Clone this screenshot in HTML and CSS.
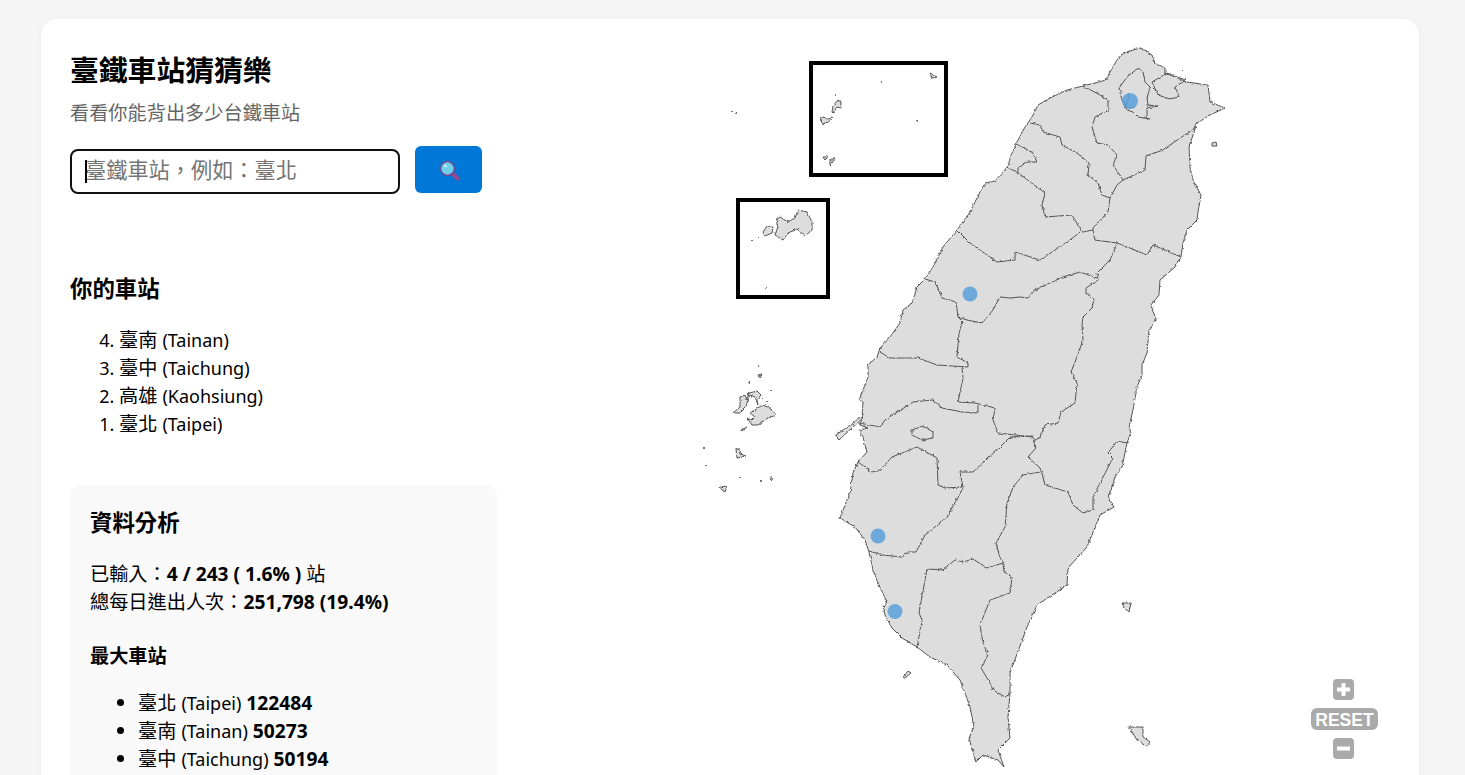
FILE: index.html
```html
<!DOCTYPE html>
<html lang="zh-Hant">
<head>
<meta charset="utf-8">
<title>臺鐵車站猜猜樂</title>
<link rel="stylesheet" href="styles.css">
</head>
<body>
<main class="card">
  <section class="left">
    <h1 class="title">臺鐵車站猜猜樂</h1>
    <p class="subtitle">看看你能背出多少台鐵車站</p>
    <form class="search">
      <div class="field">
        <input class="input" type="text" placeholder="臺鐵車站，例如：臺北">
        <span class="caret"></span>
      </div>
      <button class="go" type="button" aria-label="搜尋">
        <svg class="lens" width="26" height="26" viewBox="0 0 26 26">
          <path d="M15.5 15.5L20.5 20.5" stroke="#94488f" stroke-width="4.2" stroke-linecap="round"/>
          <circle cx="10.5" cy="10.5" r="6.9" fill="#6fcfe9" stroke="#6f4a92" stroke-width="1.5"/>
          <circle cx="8.5" cy="8" r="1.6" fill="#b5ebf6"/>
        </svg>
      </button>
    </form>
    <h2 class="heading yours">你的車站</h2>
    <ol class="list guessed" reversed>
      <li>臺南 <span class="en">(Tainan)</span></li>
      <li>臺中 <span class="en">(Taichung)</span></li>
      <li>高雄 <span class="en">(Kaohsiung)</span></li>
      <li>臺北 <span class="en">(Taipei)</span></li>
    </ol>
    <section class="stats">
      <h2 class="heading">資料分析</h2>
      <p class="figures">已輸入：<b>4 / 243 ( 1.6% )</b> 站<br>總每日進出人次：<b>251,798 (19.4%)</b></p>
      <h3 class="sub">最大車站</h3>
      <ul class="list largest">
        <li>臺北 <span class="en">(Taipei)</span> <b>122484</b></li>
        <li>臺南 <span class="en">(Tainan)</span> <b>50273</b></li>
        <li>臺中 <span class="en">(Taichung)</span> <b>50194</b></li>
      </ul>
    </section>
  </section>
  <svg class="map" width="849" height="726" viewBox="540 49 849 726">
    <defs>
      <filter id="rough" x="-2%" y="-2%" width="104%" height="104%">
        <feTurbulence type="fractalNoise" baseFrequency="0.3" numOctaves="2" seed="4"/>
        <feDisplacementMap in="SourceGraphic" scale="3" xChannelSelector="R" yChannelSelector="G"/>
        <feGaussianBlur stdDeviation="0.35"/>
      </filter>
    </defs>
    <g class="land" filter="url(#rough)">
      <path d="M1140 48L1123 53L1117 60L1110 72L1106 80L1095 83L1083 86L1067 90L1050 98L1038 105L1032 117L1025 127L1017 142L1012 153L1008 166L1003 172L995 181L985 183L980 192L970 212L957 230L943 247L933 267L925 279L917 287L912 303L903 310L900 323L890 337L880 348L877 357L868 365L868 377L863 390L859 400L863 402L862 418L860 425L868 428L859 430L863 437L867 452L858 462L853 473L850 493L847 500L840 518L855 527L865 540L869 552L873 570L878 583L887 602L883 607L885 615L892 628L902 638L917 647L930 657L947 665L960 680L965 693L970 707L974 727L969 738L976 762L983 755L998 760L1004 767L998 750L1010 738L1008 717L1010 693L1010 673L1027 627L1037 605L1067 585L1068 568L1087 547L1100 515L1114 507L1108 497L1112 487L1115 477L1122 467L1127 443L1131 432L1129 427L1133 410L1137 387L1142 375L1142 365L1147 353L1149 330L1156 320L1151 305L1159 295L1160 280L1175 267L1181 257L1183 243L1187 230L1197 220L1198 212L1201 195L1193 180L1190 167L1189 147L1197 123L1210 115L1225 108L1210 102L1208 85L1187 82L1165 73L1165 68L1155 63L1152 55Z"/>
      <path class="inner" d="M1083 86L1100 95L1108 100L1108 110L1095 117L1092 127L1097 143L1108 145L1117 155L1113 165L1123 180L1145 170L1146 156L1163 150L1180 138L1193 130L1197 122"/>
      <path class="inner" d="M1030 123L1040 125L1043 132L1060 137L1062 145L1077 153L1089 163L1088 175L1098 183L1102 195L1110 198"/>
      <path class="inner" d="M1123 180L1117 185L1110 198L1108 212L1093 228L1093 230L1082 232"/>
      <path class="inner" d="M1015 143L1033 153L1037 162L1027 162L1018 168L1018 173"/>
      <path class="inner" d="M1007 167L1018 173L1025 178L1045 193L1042 205L1045 217L1072 215L1082 232"/>
      <path class="inner" d="M957 230L970 243L997 262L1015 260L1015 252L1040 260L1070 240L1080 232"/>
      <path class="inner" d="M1093 230L1095 240L1117 243L1147 255L1153 245L1181 257"/>
      <path class="inner" d="M1117 243L1110 260L1097 273L1098 280L1086 288L1086 293L1094 299L1092 308L1083 317L1082 325L1083 340L1075 362L1071 372L1077 383L1075 403L1061 412L1058 423L1045 425L1040 437L1034 441L1036 448L1028 457L1040 468L1042 473L1045 485L1068 492L1073 505L1083 513L1093 510L1093 497L1103 477L1113 458L1108 453L1117 441L1127 443"/>
      <path class="inner" d="M1097 278L1080 272L1063 277L1052 282L1035 290L1028 298L1020 297L1010 298L1000 297L993 310L982 323L967 320L958 317"/>
      <path class="inner" d="M925 279L935 282L942 298L956 302L958 317L963 322L959 333L957 357L968 363L968 367"/>
      <path class="inner" d="M880 352L890 358L918 358L937 365L968 367"/>
      <path class="inner" d="M962 368L963 378L958 402L975 403L995 408L993 420L998 433L1033 437L1035 447"/>
      <path class="inner" d="M859 423L880 427L885 420L913 402L933 400L942 408L962 412L978 413L978 405"/>
      <path class="inner" d="M912 430L923 426L933 432L933 438L922 440L912 435Z"/>
      <path class="inner" d="M858 462L872 472L880 470L892 457L917 447L937 458L938 485L945 488L963 487L960 472L973 472L1000 447L1010 437L1033 436"/>
      <path class="inner" d="M963 488L947 517L925 535L916 552L908 552L902 557L883 555L869 551"/>
      <path class="inner" d="M1040 472L1023 475L1013 487L1007 503L1005 527L996 543L1000 558L1004 563"/>
      <path class="inner" d="M917 647L922 620L919 613L927 569L943 570L955 560L963 562L973 559L987 568L1003 563L1004 572L1012 577L1010 593L990 600L980 625L983 643L988 655L981 668L990 683L993 690L1005 697L1010 694"/>
      <path class="inner" d="M1138 68L1143 72L1145 82L1150 87L1147 98L1148 105L1158 106L1147 108L1147 117L1150 119L1138 117L1133 112L1127 110L1122 100L1119 88L1127 77Z"/>
      <path class="inner" d="M1129 93L1128 100L1125 105L1130 108L1135 107"/>
      <path class="inner" d="M1152 82L1167 73L1180 78L1186 80L1175 87L1179 97L1170 99L1158 95Z"/>
      <path d="M836 435L853 423L862 416L863 418L853 427L839 440Z"/>
      <path d="M776 220L780 217L788 222L795 218L798 210L807 212L812 222L812 230L805 236L797 229L788 233L783 240L775 235L778 227Z"/>
      <path d="M763 232L767 226L773 227L772 233L765 236Z"/>
      <path d="M750 413L755 410L762 405L768 407L772 410L776 415L768 418L758 425L752 425L747 418L752 420L755 417Z"/>
      <path d="M733 413L740 407L740 397L745 395L747 400L749 393L757 391L761 395L757 400L758 405L755 397L750 395L745 408L740 413Z"/>
      <path d="M758 375L762 374L759 378ZM742 429L747 427L742 431ZM736 449L739 449L740 454L746 456L737 458ZM720 487L727 486L725 492L722 490ZM770 478L773 478L771 481Z"/>
      <path d="M832 112L833 106L838 100L841 102L841 108L837 107L833 113ZM821 118L824 117L827 119L833 118L828 122L822 124ZM823 157L828 157L825 160ZM830 159L835 159L833 162L830 165ZM930 73L937 77L932 78Z"/>
      <path d="M903 677L908 671L911 673L905 678ZM1122 603L1131 603L1129 612L1124 608ZM1129 727L1143 727L1143 737L1150 742L1147 746L1137 740ZM1212 143L1216 142L1217 146L1212 146Z"/>
      <path class="dots" d="M835 94h1v2h-1ZM881 81h1v2h-1ZM916 120h1v1h-1ZM731 110h2v2h-2ZM735 112h2v2h-2ZM751 240h2v1h-2ZM758 237h1v1h-1ZM818 232h1v1h-1ZM765 287h1v1h-1ZM758 365h1v2h-1ZM749 382h1v2h-1ZM770 390h1v2h-1ZM762 398h1v1h-1ZM767 401h1v1h-1ZM703 447h2v2h-2ZM703 464h1v1h-1ZM706 465h1v1h-1ZM739 477h2v2h-2ZM760 480h2v2h-2ZM1151 756h1v1h-1ZM1182 70h1v1h-1Z"/>
    </g>
    <rect class="frame" x="811" y="63" width="135" height="112"/>
    <rect class="frame" x="738" y="200" width="90" height="97"/>
    <circle class="pin" cx="1130" cy="101" r="8"/>
    <circle class="pin" cx="970" cy="294" r="7.5"/>
    <circle class="pin" cx="878" cy="536" r="7.5"/>
    <circle class="pin" cx="895" cy="611.500" r="7.5"/>
    <g class="zoom">
      <rect class="key" x="1333" y="679" width="21" height="21" rx="4"/>
      <path class="glyph" d="M1343.500 683v13M1337 689.500h13"/>
      <rect class="key" x="1311" y="708" width="67" height="22" rx="6"/>
      <text class="reset" x="1344.500" y="725.500">RESET</text>
      <rect class="key" x="1333" y="738" width="21" height="21" rx="4"/>
      <path class="glyph" d="M1337 748.500h13"/>
    </g>
  </svg>
</main>
</body>
</html>
```
FILE: styles.css
```css
html, body {
  margin: 0;
  height: 100%;
  overflow: hidden;
}
body {
  background: #f5f5f5;
  font-family: "Noto Sans", "Noto Sans CJK TC", sans-serif;
  color: #000;
}
.card {
  display: flex;
  gap: 43px;
  margin: 19px 46px 0 41px;
  padding: 30px 30px 30px 29px;
  background: #fff;
  border-radius: 16px;
  box-shadow: 0 2px 8px rgba(0, 0, 0, 0.04);
}
.left {
  flex: 0 0 427px;
  min-width: 0;
}
.title {
  margin: 0;
  font-size: 28.8px;
  line-height: 42px;
  font-weight: 700;
}
.subtitle {
  margin: 8px 0 0;
  font-size: 19.2px;
  line-height: 28px;
  color: #666;
}
.search {
  display: flex;
  align-items: flex-start;
  gap: 15px;
  margin-top: 19px;
}
.field {
  position: relative;
  margin-top: 3px;
}
.input {
  display: block;
  box-sizing: border-box;
  width: 330px;
  height: 45px;
  padding: 0 13px 4px;
  border: 2px solid #111;
  border-radius: 8px;
  background: #fff;
  font: inherit;
  font-size: 21.2px;
  outline: none;
}
.input::placeholder {
  color: #757575;
}
.caret {
  position: absolute;
  left: 15px;
  top: 11px;
  width: 2px;
  height: 23px;
  background: #000;
}
.go {
  flex: none;
  display: flex;
  align-items: center;
  justify-content: center;
  width: 67px;
  height: 47px;
  padding: 0;
  border: 0;
  border-radius: 6px;
  background: #0078d7;
}
.lens {
  display: block;
  margin: 2px 0 0 2px;
}
.heading {
  margin: 0;
  font-size: 22.4px;
  line-height: 32px;
  font-weight: 700;
}
.yours {
  margin-top: 79px;
}
.list {
  margin: 0;
  padding-left: 48px;
  font-size: 19.2px;
  line-height: 28px;
}
.en {
  font-size: 18px;
  line-height: 1;
}
b {
  line-height: 1;
}
.guessed {
  margin-top: 21px;
  padding-left: 49px;
}
.guessed li::marker {
  font-size: 18px;
}
.stats {
  box-sizing: border-box;
  margin-top: 47px;
  padding: 22px 20px 20px;
  background: #f9f9f9;
  border-radius: 10px;
}
.figures {
  margin: 21px 0 0;
  font-size: 19.2px;
  line-height: 28px;
}
.sub {
  margin: 26px 0 0;
  font-size: 19.2px;
  line-height: 28px;
  font-weight: 700;
}
.largest {
  margin-top: 19px;
}
.map {
  flex: none;
  display: block;
  overflow: visible;
}
.land path {
  fill: #ddd;
  stroke: #555;
  stroke-width: 1;
  stroke-linejoin: round;
}
.land .inner {
  fill: none;
}
.land .dots {
  fill: #777;
  stroke: none;
}
.frame {
  fill: none;
  stroke: #000;
  stroke-width: 4;
}
.pin {
  fill: #5aa0da;
  fill-opacity: 0.85;
}
.key {
  fill: #aaa;
}
.glyph {
  fill: none;
  stroke: #fff;
  stroke-width: 4;
}
.reset {
  fill: #fff;
  font-family: "Liberation Sans", sans-serif;
  font-size: 17.500px;
  font-weight: 700;
  text-anchor: middle;
}
```
